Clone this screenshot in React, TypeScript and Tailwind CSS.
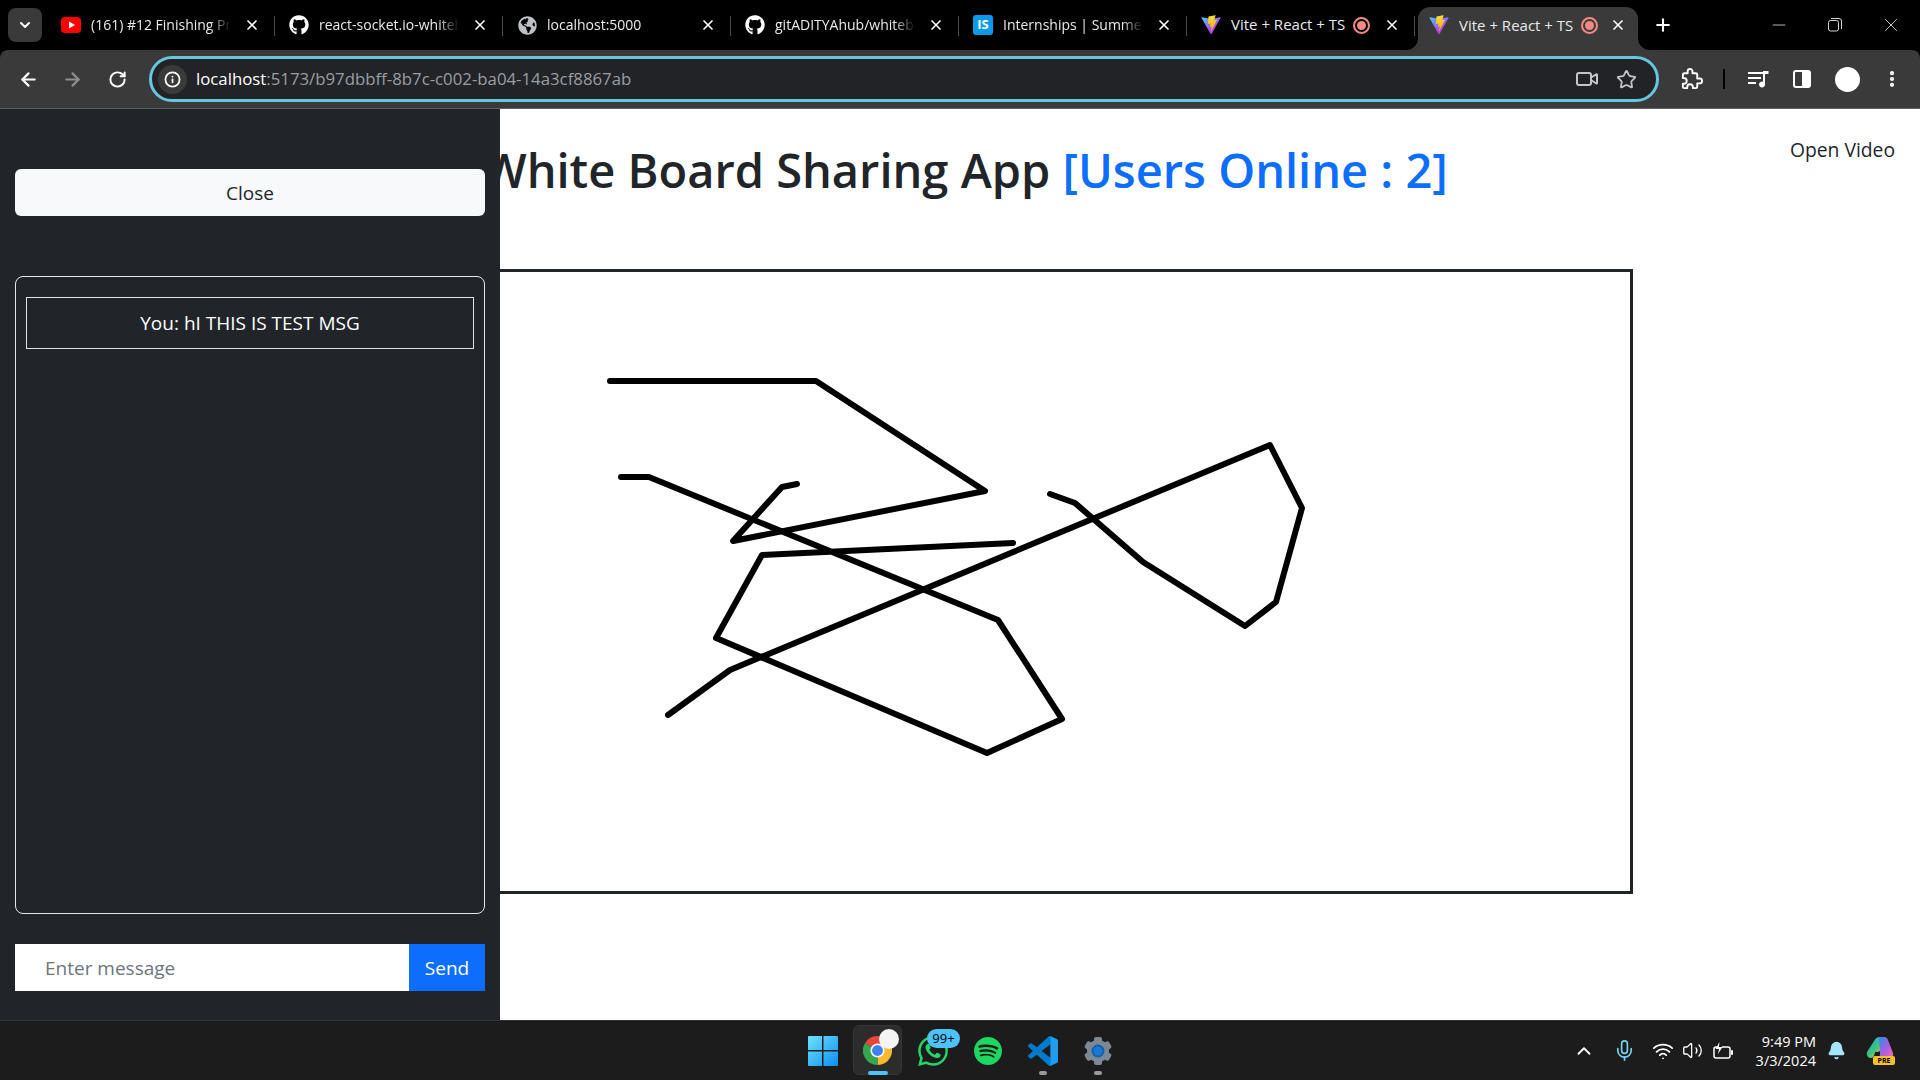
import { ArrowLeft, ArrowRight, Bell, ChevronDown, ChevronUp, EllipsisVertical, Info, Mic, Minus, Plus, RotateCw, Star, Video, Volume2, Wifi, X } from "lucide-react";
import type { ReactNode } from "react";
import { FaGithub, FaGlobeAmericas } from "react-icons/fa";
import { SiSpotify, SiWhatsapp } from "react-icons/si";

const STROKES = [
  "610,381 816,381 985,491 733,541 782,487 797,484",
  "621,477 649,477 998,620 1062,719 987,753 716,638 762,555 1013,543",
  "668,715 730,670 1270,445 1302,508 1276,602 1245,626 1143,562 1075,503 1050,494",
];

function YoutubeIcon() {
  return (
    <svg width="20" height="16" viewBox="0 0 20 16">
      <rect width="20" height="16" rx="4" fill="#ff0000" />
      <path d="M8 4.5v7l6-3.5z" fill="#fff" />
    </svg>
  );
}

function ViteIcon({ id }: { id: string }) {
  return (
    <svg width="20" height="20" viewBox="0 0 410 404">
      <defs>
        <linearGradient id={`${id}a`} x1="6" y1="33" x2="235" y2="344" gradientUnits="userSpaceOnUse">
          <stop stopColor="#41D1FF" />
          <stop offset="1" stopColor="#BD34FE" />
        </linearGradient>
        <linearGradient id={`${id}b`} x1="194" y1="8" x2="236" y2="293" gradientUnits="userSpaceOnUse">
          <stop stopColor="#FFEA83" />
          <stop offset="0.08" stopColor="#FFDD35" />
          <stop offset="1" stopColor="#FFA800" />
        </linearGradient>
      </defs>
      <path d="M399.641 59.525L215.643 388.545C211.844 395.338 202.084 395.378 198.228 388.618L10.582 59.556C6.381 52.19 12.68 43.267 21.028 44.759L205.223 77.682C206.398 77.892 207.601 77.89 208.776 77.676L389.119 44.806C397.439 43.289 403.768 52.143 399.641 59.525Z" fill={`url(#${id}a)`} />
      <path d="M292.965 1.574L156.801 28.255C154.563 28.694 152.906 30.59 152.771 32.866L144.395 174.33C144.198 177.662 147.258 180.248 150.51 179.498L188.42 170.749C191.967 169.931 195.172 173.055 194.443 176.622L183.18 231.775C182.422 235.487 185.907 238.661 189.532 237.56L212.947 230.446C216.577 229.344 220.065 232.527 219.297 236.242L201.398 322.875C200.278 328.294 207.486 331.249 210.492 326.603L212.5 323.5L323.454 102.072C325.312 98.365 322.108 94.137 318.036 94.923L279.014 102.454C275.347 103.161 272.227 99.746 273.262 96.158L298.731 7.867C299.767 4.273 296.636 0.855 292.965 1.574Z" fill={`url(#${id}b)`} />
    </svg>
  );
}

function RecordDot() {
  return (
    <span className="flex h-[17px] w-[17px] items-center justify-center rounded-full border-2 border-[#f28b82]">
      <span className="h-[9px] w-[9px] rounded-full bg-[#f28b82]" />
    </span>
  );
}

function Tab({ icon, title, record }: { icon: ReactNode; title: string; record?: boolean }) {
  return (
    <div className="relative flex h-full w-[228px] shrink-0 items-center pl-[14px] text-[14px] text-[#e8eaed]">
      <span className="flex w-5 shrink-0 items-center justify-center">{icon}</span>
      <span className={record ? "ml-[10px] -mt-px w-[116px] overflow-hidden whitespace-nowrap text-[15px]" : "ml-[10px] -mt-px w-[140px] overflow-hidden whitespace-nowrap [mask-image:linear-gradient(to_right,black_85%,transparent)]"}>
        {title}
      </span>
      {record ? (
        <span className="ml-[6px]">
          <RecordDot />
        </span>
      ) : null}
      <X size={16} strokeWidth={2.5} className="absolute left-[197px] text-white" />
      <span className="absolute right-0 top-[16px] h-5 w-px bg-[#4a4a4a]" />
    </div>
  );
}

function TabBar() {
  return (
    <div className="flex h-[50px] shrink-0 bg-black pl-2">
      <div className="mr-[5px] mt-2 flex h-[34px] w-[34px] items-center justify-center rounded-lg bg-[#3a3a3a] text-white">
        <ChevronDown size={16} strokeWidth={3} />
      </div>
      <Tab icon={<YoutubeIcon />} title="(161) #12 Finishing Project" />
      <Tab icon={<FaGithub size={20} color="#fff" />} title="react-socket.io-whiteboard" />
      <Tab icon={<FaGlobeAmericas size={19} color="#bdc1c6" />} title="localhost:5000" />
      <Tab icon={<FaGithub size={20} color="#fff" />} title="gitADITYAhub/whiteboard" />
      <Tab icon={<span className="flex h-5 w-5 items-center justify-center rounded-[3px] bg-[#0a9ae8] text-[13px] font-bold text-white">IS</span>} title="Internships | Summer" />
      <Tab icon={<ViteIcon id="v1" />} title="Vite + React + TS" record />

      <div className="relative ml-[3px] mt-[7px] flex h-[43px] w-[220px] shrink-0 items-center rounded-t-xl bg-[#3a3a3a] pb-[7px] pl-[11px] text-[15px] text-[#e8eaed]">
        <span className="absolute -left-3 bottom-0 h-3 w-3 bg-[#3a3a3a]">
          <span className="block h-3 w-3 rounded-br-xl bg-black" />
        </span>
        <span className="absolute -right-3 bottom-0 h-3 w-3 bg-[#3a3a3a]">
          <span className="block h-3 w-3 rounded-bl-xl bg-black" />
        </span>
        <ViteIcon id="v2" />
        <span className="ml-[10px] w-[116px] overflow-hidden whitespace-nowrap">Vite + React + TS</span>
        <span className="ml-[6px]">
          <RecordDot />
        </span>
        <X size={16} strokeWidth={2.5} className="absolute left-[192px] text-white" />
      </div>

      <div className="ml-[15px] flex items-center text-white">
        <Plus size={20} strokeWidth={2.5} />
      </div>
      <div className="flex flex-1 items-center justify-end pr-[18px] text-[#d5d5d5]">
        <Minus size={20} strokeWidth={1} />
        <svg width="14" height="14" viewBox="0 0 14 14" fill="none" stroke="currentColor" className="ml-[39px]">
          <rect x="0.5" y="2.5" width="10" height="10.5" rx="2" />
          <path d="M3 .5h8a2.5 2.5 0 0 1 2.5 2.5v8" />
        </svg>
        <X size={22} strokeWidth={1} className="ml-[38px]" />
      </div>
    </div>
  );
}

function Toolbar() {
  return (
    <div className="flex h-[59px] shrink-0 items-center border-b border-[#5f6060] bg-black">
      <div className="flex h-full w-full items-center rounded-t-lg bg-[#3a3a3a]">
        <ArrowLeft size={21} strokeWidth={2.5} className="ml-[18px] text-white" />
        <ArrowRight size={21} strokeWidth={2.5} className="ml-[23px] text-[#8f8f8f]" />
        <RotateCw size={19} strokeWidth={2.5} className="ml-[25px] text-white" />
        <div className="ml-[22px] flex h-[46px] w-[1510px] shrink-0 items-center rounded-full border-[3px] border-[#66c7dc] bg-[#212327] pl-[6px]">
          <span className="flex h-[29px] w-[29px] items-center justify-center rounded-full bg-[#3a3a3a] text-white">
            <Info size={17} strokeWidth={2.5} />
          </span>
          <span className="ml-[9px] whitespace-nowrap text-[16.8px] text-white">
            localhost<span className="text-[#9a9ea3]">:5173/b97dbbff-8b7c-c002-ba04-14a3cf8867ab</span>
          </span>
          <span className="ml-auto flex items-center pr-[19px] text-[#c4c7c5]">
            <Video size={24} strokeWidth={2} />
            <Star size={21} strokeWidth={2} className="ml-[17px]" />
          </span>
        </div>
        <svg width="23" height="23" viewBox="0 0 24 24" fill="none" stroke="#fff" strokeWidth="2" strokeLinejoin="round" className="ml-[21px]">
          <path d="M20.500 11H18V7a1.500 1.500 0 0 0-1.500-1.500H13V3.500a2.500 2.500 0 0 0-5 0v2H4.500A1.500 1.500 0 0 0 3 7v3.500h1a3 3 0 0 1 0 6H3v3A1.500 1.500 0 0 0 4.500 21h3v-1a3 3 0 0 1 6 0v1h3a1.500 1.500 0 0 0 1.500-1.500V16h2.500a2.500 2.500 0 0 0 0-5z" />
        </svg>
        <span className="ml-[20px] h-5 w-0.5 bg-black" />
        <svg width="21" height="18" viewBox="0 0 21 18" fill="#fff" className="ml-[23px]">
          <path d="M0 2h15v2H0zM0 7h13v2H0zM0 12h8v2H0z" />
          <path d="M15 1h5.500v3H17v10.500a3 3 0 1 1-2-2.800z" />
        </svg>
        <svg width="18" height="18" viewBox="0 0 18 18" className="ml-[24px]">
          <rect x="1" y="1" width="16" height="16" rx="2" fill="none" stroke="#fff" strokeWidth="2" />
          <rect x="9" y="1" width="8" height="16" fill="#fff" />
        </svg>
        <span className="ml-[24px] h-[25px] w-[25px] rounded-full bg-white" />
        <EllipsisVertical size={20} strokeWidth={3} className="ml-[22px] text-white" />
      </div>
    </div>
  );
}

function ChatPanel() {
  return (
    <aside className="absolute inset-y-0 left-0 flex w-[500px] flex-col bg-[#212529] px-[15px] pb-[29px] pt-[60px] text-[19px] text-white">
      <button className="h-[47px] shrink-0 rounded-md bg-[#f8f9fa] pt-0.5 text-[#212529]">Close</button>
      <div className="mt-[60px] flex-1 rounded-lg border border-[#e8e8e8] px-[10px] pt-5">
        <div className="flex h-[52px] items-center justify-center border border-[#dee2e6] pt-px">You: hI THIS IS TEST MSG</div>
      </div>
      <div className="mt-[30px] flex h-[47px] shrink-0">
        <input placeholder="Enter message" className="min-w-0 flex-1 bg-white px-[30px] pt-0.5 text-[#212529] outline-none placeholder:text-[#6c757d]" />
        <button className="w-[76px] bg-[#0d6efd] pt-0.5 text-white">Send</button>
      </div>
    </aside>
  );
}

function Board() {
  return (
    <main className="relative min-h-0 flex-1 overflow-hidden bg-white text-[#212529]">
      <h1 className="mt-[31px] whitespace-nowrap pl-[10px] text-center text-[47px] font-semibold leading-[60px]">
        White Board Sharing App <span className="text-[#0d6efd]">[Users Online : 2]</span>
      </h1>
      <button className="absolute right-[25px] top-[27px] text-[19.3px]">Open Video</button>
      <div className="mx-auto mt-[69px] h-[625px] w-[1346px] border-[3px] border-[#212529]">
        <svg width="1340" height="619" viewBox="290 272 1340 619" className="block">
          {STROKES.map((points) => (
            <polyline key={points} points={points} fill="none" stroke="#000" strokeWidth="6" strokeLinecap="round" strokeLinejoin="round" />
          ))}
        </svg>
      </div>
      <ChatPanel />
    </main>
  );
}

function WindowsIcon() {
  return (
    <svg width="30" height="30" viewBox="0 0 30 30">
      <defs>
        <linearGradient id="win" x1="0" y1="0" x2="1" y2="1">
          <stop stopColor="#6fe3fb" />
          <stop offset="1" stopColor="#0a8ef0" />
        </linearGradient>
      </defs>
      <path d="M0 1a1 1 0 0 1 1-1h13v14H0zM15.500 0H29a1 1 0 0 1 1 1v13H15.500zM0 15.500h14V30H1a1 1 0 0 1-1-1zM15.500 15.500H30V29a1 1 0 0 1-1 1H15.500z" fill="url(#win)" />
    </svg>
  );
}

function ChromeIcon() {
  return (
    <svg width="29" height="29" viewBox="0 0 24 24">
      <path d="M12 12L1.600 6A12 12 0 0 1 22.400 6z" fill="#e8453c" />
      <path d="M12 12L22.400 6A12 12 0 0 1 12 24z" fill="#f9bb2d" />
      <path d="M12 12L12 24A12 12 0 0 1 1.600 6z" fill="#34a853" />
      <circle cx="12" cy="12" r="5.800" fill="#fff" />
      <circle cx="12" cy="12" r="4.500" fill="#3b82f0" />
    </svg>
  );
}

function VsCodeIcon() {
  return (
    <svg width="30" height="30" viewBox="0 0 100 100">
      <path fillRule="evenodd" d="M96.460 10.800L75.860.870a6.230 6.230 0 0 0-7.100 1.210L29.550 37.850 12.470 24.880a4.160 4.160 0 0 0-5.320.240L1.660 30.100a4.170 4.170 0 0 0 0 6.160L16.470 50 1.660 63.740a4.170 4.170 0 0 0 0 6.160l5.490 4.980a4.160 4.160 0 0 0 5.320.240l17.080-12.970 39.210 35.770a6.200 6.200 0 0 0 7.100 1.210l20.600-9.920A6.250 6.250 0 0 0 100 83.580V16.420a6.250 6.250 0 0 0-3.540-5.620zM75 27.300L45.200 50 75 72.700z" fill="#007acc" />
      <path d="M75 .500L96.500 10.800Q100 12.500 100 16.400V83.600Q100 87.500 96.500 89.200L75 99.500z" fill="#1f9cf0" />
    </svg>
  );
}

function GearIcon() {
  return (
    <svg width="30" height="30" viewBox="0 0 30 30">
      <circle cx="15" cy="15" r="11" fill="#7d8894" />
      {[0, 60, 120].map((deg) => (
        <rect key={deg} x="11" y="1" width="8" height="28" rx="2" fill="#7d8894" transform={`rotate(${deg} 15 15)`} />
      ))}
      <circle cx="15" cy="15" r="6.500" fill="#0f5fb0" />
      <circle cx="15" cy="15" r="4.500" fill="#1a78d0" />
    </svg>
  );
}

function BatteryIcon() {
  return (
    <svg width="20" height="18" viewBox="0 0 20 18" className="ml-[10px]">
      <path d="M5 5H3a2 2 0 0 0-2 2v7a2 2 0 0 0 2 2h12a2 2 0 0 0 2-2V7a2 2 0 0 0-2-2H9" fill="none" stroke="#fff" strokeWidth="1.500" />
      <rect x="18" y="8" width="2" height="5" rx="1" fill="#fff" />
      <path d="M6.500 0L2.500 7h3.500l-1 5 4.500-7H6z" fill="#fff" />
    </svg>
  );
}

function CopilotIcon() {
  return (
    <span className="relative ml-[20px] block h-[29px] w-[29px]">
      <svg width="28" height="24" viewBox="0 0 28 24">
        <defs>
          <linearGradient id="cpA" x1="0" y1="0" x2="1" y2="1">
            <stop stopColor="#1aa6e8" />
            <stop offset="0.5" stopColor="#3fc37a" />
            <stop offset="1" stopColor="#f5c93a" />
          </linearGradient>
          <linearGradient id="cpB" x1="0" y1="0" x2="1" y2="1">
            <stop stopColor="#2c8be8" />
            <stop offset="0.6" stopColor="#b45ce0" />
            <stop offset="1" stopColor="#ee6fb0" />
          </linearGradient>
        </defs>
        <path d="M9 3.500Q10 1 13 1h6l-4 12q-1 3-3 3H9q-1 6-4 6H4Q0 21 1 16z" fill="url(#cpA)" />
        <path d="M13 1h5q3 0 4 3l5 13q1 4-3 4h-8q-3 0-2-3z" fill="url(#cpB)" />
      </svg>
      <span className="absolute bottom-0 right-0 flex h-[9px] w-[22px] items-center justify-center rounded-[2px] bg-[#fbc02d] text-[7px] font-bold leading-none text-black">PRE</span>
    </span>
  );
}

function Taskbar() {
  return (
    <footer className="flex h-[60px] shrink-0 border-t border-[#333] bg-[#1c1c1c] text-white">
      <div className="flex-1 pl-[25px]" />
      <div className="flex">
        <span className="flex w-[55px] items-center justify-center">
          <WindowsIcon />
        </span>
        <span className="relative flex w-[55px] items-center justify-center">
          <span className="absolute inset-x-[3px] bottom-[5px] top-[4px] rounded-md border border-[#353535] bg-[#2c2c2c]" />
          <span className="relative">
            <ChromeIcon />
          </span>
          <span className="absolute right-[6px] top-[8px] h-5 w-5 rounded-full bg-[#f4f4f4]" />
          <span className="absolute bottom-[5px] left-[18px] h-[4px] w-5 rounded-full bg-[#4cc2ff]" />
        </span>
        <span className="relative flex w-[55px] items-center justify-center">
          <SiWhatsapp size={30} color="#25d366" />
          <span className="absolute right-0 top-[8px] flex h-[19px] w-[33px] items-center justify-center rounded-full bg-[#4cc2ff] text-[13px] text-black">99+</span>
        </span>
        <span className="flex w-[55px] items-center justify-center">
          <SiSpotify size={28} color="#1ed760" />
        </span>
        <span className="relative flex w-[55px] items-center justify-center">
          <VsCodeIcon />
          <span className="absolute bottom-[5px] left-[24px] h-[4px] w-2 rounded-full bg-[#9a9a9a]" />
        </span>
        <span className="relative flex w-[55px] items-center justify-center">
          <GearIcon />
          <span className="absolute bottom-[5px] left-[24px] h-[4px] w-2 rounded-full bg-[#9a9a9a]" />
        </span>
      </div>
      <div className="flex flex-1 items-center justify-end pr-[25px]">
        <ChevronUp size={22} strokeWidth={2} />
        <Mic size={23} strokeWidth={1.75} className="ml-[18px] text-[#76d2ee]" />
        <Wifi size={22} strokeWidth={2} className="ml-[16px]" />
        <Volume2 size={21} strokeWidth={1.5} className="ml-[8px]" />
        <BatteryIcon />
        <div className="ml-[23px] text-right text-[14.5px] leading-[19px]">
          <div>9:49 PM</div>
          <div>3/3/2024</div>
        </div>
        <Bell size={19} fill="#a5e6fb" stroke="#a5e6fb" className="ml-[11px]" />
        <CopilotIcon />
      </div>
    </footer>
  );
}

export default function App() {
  return (
    <div className="flex h-screen w-screen flex-col overflow-hidden bg-black font-['Open_Sans',sans-serif]">
      <TabBar />
      <Toolbar />
      <Board />
      <Taskbar />
    </div>
  );
}
